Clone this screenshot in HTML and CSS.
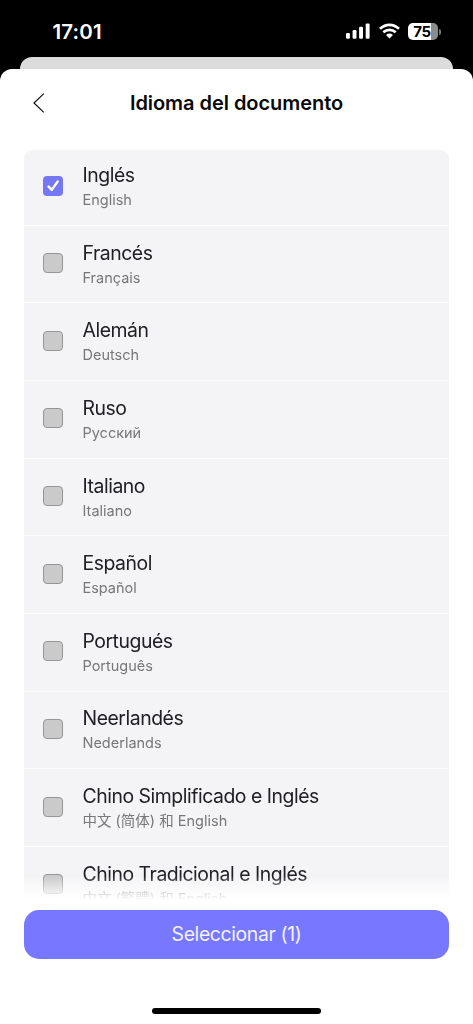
FILE: index.html
```html
<!DOCTYPE html>
<html lang="es">
<head>
<meta charset="utf-8">
<title>Idioma del documento</title>
<link rel="stylesheet" href="styles.css">
</head>
<body>
<div class="phone">
  <header class="status">
    <span class="time">17:01</span>
    <div class="indicators">
      <svg class="signal" width="24" height="16" viewBox="0 0 24 16" fill="#fff"><rect x="0" y="9.9" width="3.9" height="5.8" rx="1.2"/><rect x="6.6" y="7" width="3.9" height="8.7" rx="1.2"/><rect x="13.1" y="3.8" width="3.9" height="11.9" rx="1.2"/><rect x="19.7" y=".4" width="3.9" height="15.3" rx="1.2"/></svg>
      <svg class="wifi" width="21" height="16" viewBox="0 0 21 16" fill="none" stroke="#fff" stroke-width="2.7"><path d="M1 5.8Q5.3 1.8 10.5 1.8T20 5.8"/><path d="M4.3 9.3Q7.1 6.8 10.5 6.8T16.7 9.3"/><path d="M10.5 15.5L7 12Q10.5 9.1 14 12Z" fill="#fff" stroke="none"/></svg>
      <div class="battery"><span class="level">75</span><i class="cap"></i></div>
    </div>
  </header>
  <div class="back-sheet"></div>
  <main class="sheet">
    <div class="titlebar">
      <svg class="back" width="12" height="20" viewBox="0 0 12 20" fill="none" stroke="#111" stroke-width="1.2"><path d="M10.8.6L1 10l9.8 9.4"/></svg>
      <h1 class="title"><span>Idioma del documento</span></h1>
    </div>
    <div class="list">
      <div class="row"><span class="box checked"><svg width="20" height="20" viewBox="0 0 20 20" fill="none" stroke="#fff" stroke-width="2.5" stroke-linecap="round" stroke-linejoin="round"><path d="M5.6 10.6l3.2 3.3 5.8-8.3"/></svg></span><div class="labels"><span class="name">Inglés</span><span class="native">English</span></div></div>
      <div class="row"><span class="box"></span><div class="labels"><span class="name">Francés</span><span class="native">Français</span></div></div>
      <div class="row"><span class="box"></span><div class="labels"><span class="name">Alemán</span><span class="native">Deutsch</span></div></div>
      <div class="row"><span class="box"></span><div class="labels"><span class="name">Ruso</span><span class="native">Русский</span></div></div>
      <div class="row"><span class="box"></span><div class="labels"><span class="name">Italiano</span><span class="native">Italiano</span></div></div>
      <div class="row"><span class="box"></span><div class="labels"><span class="name">Español</span><span class="native">Español</span></div></div>
      <div class="row"><span class="box"></span><div class="labels"><span class="name">Portugués</span><span class="native">Português</span></div></div>
      <div class="row"><span class="box"></span><div class="labels"><span class="name">Neerlandés</span><span class="native">Nederlands</span></div></div>
      <div class="row"><span class="box"></span><div class="labels"><span class="name">Chino Simplificado e Inglés</span><span class="native">中文 (简体) 和 English</span></div></div>
      <div class="row"><span class="box"></span><div class="labels"><span class="name">Chino Tradicional e Inglés</span><span class="native" lang="zh-Hant">中文 (繁體) 和 English</span></div></div>
    </div>
    <button class="select" type="button">Seleccionar (1)</button>
    <div class="home"></div>
  </main>
</div>
</body>
</html>
```
FILE: styles.css
```css
* { box-sizing: border-box; }
body { margin: 0; background: #000; font-family: Inter, "Noto Sans CJK SC", sans-serif; }
.phone { width: 473px; height: 1024px; overflow: hidden; display: flex; flex-direction: column; background: #000; }
.status { height: 57px; flex: none; display: flex; justify-content: space-between; padding: 0 32px 0 52.5px; }
.time { color: #fff; font-size: 20.5px; font-weight: 600; line-height: 24px; margin-top: 20px; letter-spacing: .15px; }
.indicators { display: flex; align-items: flex-start; padding-top: 23px; }
.signal { margin-right: 8.5px; }
.wifi { margin-right: 8.5px; }
.battery { display: flex; align-items: center; }
.level { width: 30px; height: 17px; border-radius: 5px; background: linear-gradient(90deg, #fff 76%, #8b8b8b 76%); color: #000; font-size: 15px; line-height: 17px; font-weight: 700; text-align: center; letter-spacing: -.3px; padding-right: 2px; }
.cap { width: 2px; height: 6px; margin-left: 1px; border-radius: 0 3px 3px 0; background: #777; }
.back-sheet { flex: none; height: 12px; margin: 0 20px 0 19.5px; border-radius: 12px 12px 0 0; background: #dcdcdd; }
.sheet { flex: 1; display: flex; flex-direction: column; background: #fff; border-radius: 12px 12px 0 0; padding: 0 24px; }
.titlebar { flex: none; height: 80.6px; display: grid; grid-template-columns: 25px 1fr 25px; padding-top: 24px; align-items: start; }
.back { margin-left: 9px; }
.title { margin: -2px 0 0; font-size: 20px; line-height: 24px; font-weight: 600; letter-spacing: -.05px; text-align: center; color: #0a0a0a; white-space: nowrap; }
.list { flex: none; height: 751px; overflow: hidden; border-radius: 8px 8px 0 0; background: #f4f4f6; -webkit-mask-image: linear-gradient(#000 726px, transparent 750px); mask-image: linear-gradient(#000 726px, transparent 750px); }
.row { height: 77.64px; border-bottom: 1px solid #fdfdfe; display: flex; align-items: flex-start; padding: 1.4px 0 0 19.3px; }
.row:first-child { height: 76.24px; padding-top: 0; }
.box { flex: none; width: 20px; height: 20px; margin-top: 26px; border: 1.3px solid #969698; border-radius: 4px; background: #cacacb; }
.box.checked { border: 0; background: #7578f5; }
.box svg { display: block; }
.labels { display: flex; flex-direction: column; margin-left: 19.2px; padding-top: 12.5px; white-space: nowrap; }
.name { font-size: 19.4px; line-height: 26px; color: #202024; letter-spacing: -.46px; }
.native { font-size: 14.5px; line-height: 24px; color: #77777a; }
.select { flex: none; height: 49px; margin-top: 9.4px; padding: 0; border: 0; border-radius: 15px; background: #7778ff; color: #f3f3ff; font: 400 19.4px/48px Inter, sans-serif; letter-spacing: -.37px; }
.home { flex: none; width: 169px; height: 6px; border-radius: 3px; background: #000; margin: 49px auto 0; }
```
